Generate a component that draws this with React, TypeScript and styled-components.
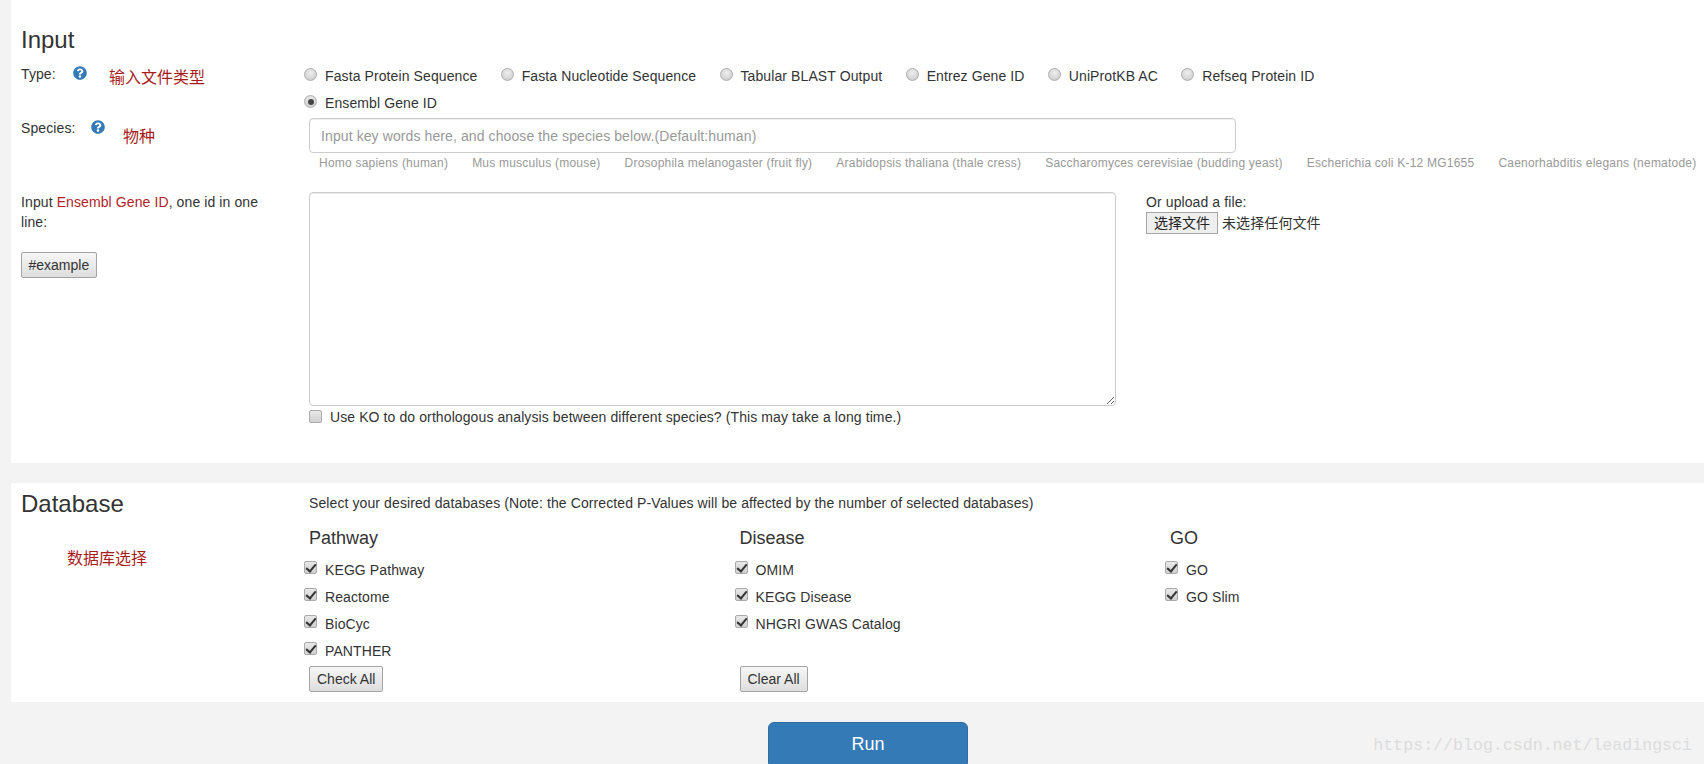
import React from 'react';
import styled, { createGlobalStyle } from 'styled-components';
import { FaQuestionCircle } from 'react-icons/fa';

const GlobalStyle = createGlobalStyle`
  html, body {
    margin: 0;
    height: 764px;
    overflow: hidden;
    background: #f3f3f3;
  }
  body {
    font-family: 'Liberation Sans', 'Noto Sans CJK SC', sans-serif;
    font-size: 14px;
    line-height: 20px;
    letter-spacing: 0.1px;
    color: #333;
  }
  * {
    box-sizing: border-box;
  }
`;

const Page = styled.div`
  position: relative;
  height: 764px;
  overflow: hidden;
  padding-left: 11px;
`;

const Panel = styled.section<{ $height: number }>`
  background: #fff;
  height: ${(p) => p.$height}px;
  padding-left: 10px;
  margin-bottom: 20px;
`;

const Title = styled.h3`
  font-size: 24px;
  font-weight: 400;
  line-height: 26px;
  letter-spacing: 0;
  margin: 0;
  color: #333;
`;

const InputTitle = styled(Title)`
  padding-top: 27px;
  margin-bottom: 8px;
`;

const Row = styled.div<{ $height: number }>`
  display: grid;
  grid-template-columns: 283px 1fr;
  height: ${(p) => p.$height}px;
`;

const SideLabel = styled.div<{ $top?: number }>`
  display: flex;
  align-items: flex-start;
  padding-top: ${(p) => p.$top ?? 0}px;
`;

const SideText = styled.span<{ $width: number }>`
  width: ${(p) => p.$width}px;
`;

const Help = styled(FaQuestionCircle)`
  color: #337ab7;
  font-size: 14px;
  margin-top: 2px;
`;

const Note = styled.span<{ $left: number; $top: number }>`
  font-family: 'Liberation Serif', 'Noto Sans CJK SC', serif;
  font-size: 16px;
  letter-spacing: 0;
  color: #a81c1c;
  margin-left: ${(p) => p.$left}px;
  margin-top: ${(p) => p.$top}px;
`;

const RadioGroup = styled.div`
  display: flex;
  flex-wrap: wrap;
  align-content: flex-start;
  width: 1060px;
  row-gap: 7px;
  column-gap: 23.3px;
  padding-top: 5px;
`;

const Option = styled.label`
  display: inline-flex;
  align-items: flex-start;
  height: 20px;
  color: #333;
`;

const Radio = styled.input.attrs({ type: 'radio' })`
  appearance: none;
  position: relative;
  width: 13px;
  height: 13px;
  margin: 2px 8px 0 0;
  border: 1px solid #adadad;
  border-radius: 50%;
  background: radial-gradient(circle at 50% 35%, #eeeeee 0%, #c8c8c8 100%);
  flex: none;

  &:checked::after {
    content: '';
    position: absolute;
    left: 2.5px;
    top: 2.5px;
    width: 6px;
    height: 6px;
    border-radius: 50%;
    background: #444;
  }
`;

const Checkbox = styled.input.attrs({ type: 'checkbox' })`
  appearance: none;
  position: relative;
  width: 13px;
  height: 13px;
  margin: 1px 8px 0 0;
  border: 1px solid #aaa;
  border-radius: 2px;
  background: linear-gradient(#e8e8e8, #d0d0d0);
  flex: none;

  &:checked::after {
    content: '';
    position: absolute;
    left: 3px;
    top: 0;
    width: 4px;
    height: 8px;
    border: solid #333;
    border-width: 0 2px 2px 0;
    transform: rotate(40deg);
  }
`;

const FieldColumn = styled.div`
  padding-left: 5px;
`;

const SpeciesInput = styled.input`
  display: block;
  width: 927px;
  height: 35px;
  padding: 0 11px;
  border: 1px solid #ccc;
  border-radius: 4px;
  font: inherit;
  letter-spacing: 0.1px;
  box-shadow: inset 0 1px 1px rgba(0, 0, 0, 0.075);

  &::placeholder {
    color: #999;
  }
`;

const SpeciesList = styled.div`
  display: flex;
  gap: 24px;
  padding-left: 10px;
  margin-top: 1px;
  font-size: 12px;
  line-height: 18px;
  letter-spacing: 0.22px;
  height: 18px;
  color: #999;
  white-space: nowrap;
`;

const Inline = styled.div`
  display: flex;
  align-items: flex-start;
  gap: 30px;
`;

const Sequence = styled.textarea`
  display: block;
  width: 807px;
  height: 214px;
  border: 1px solid #ccc;
  border-radius: 4px;
  box-shadow: inset 0 1px 1px rgba(0, 0, 0, 0.075);
`;

const Upload = styled.div`
  line-height: 20px;
`;

const FileRow = styled.div`
  display: flex;
  align-items: center;
  gap: 4px;
`;

const FileButton = styled.button`
  height: 22px;
  width: 72px;
  padding: 0;
  background: #efefef;
  border: 1px solid #a6a6a6;
  font: inherit;
  color: #222;
`;

const KoOption = styled(Option)`
  margin-top: 1px;
  width: max-content;

  input {
    margin: 3px 8px 0 0;
  }
`;

const Highlight = styled.span`
  color: #b21e2a;
`;

const Button = styled.button`
  display: block;
  height: 26px;
  padding: 0 6.5px;
  background: linear-gradient(#f6f6f6, #dedede);
  border: 1px solid #a4a4a4;
  border-radius: 2px;
  font: inherit;
  color: #333;
`;

const ExampleButton = styled(Button)`
  margin-top: 20px;
`;

const DatabaseTop = styled.div`
  padding-top: 10px;
  padding-left: 5px;
`;

const Columns = styled.div`
  display: grid;
  grid-template-columns: repeat(3, 430.5px);
  margin-top: 15px;
`;

const GroupTitle = styled.h4`
  font-size: 18px;
  font-weight: 400;
  line-height: 20px;
  letter-spacing: 0;
  margin: 0 0 12px 5px;
  color: #333;
`;

const CheckList = styled.div`
  display: flex;
  flex-direction: column;
  gap: 7px;
  height: 101px;
`;

const ActionButton = styled(Button)`
  margin: 5px 0 0 5px;
  padding: 0 7px;
`;

const DatabaseLabel = styled.div`
  display: flex;
  flex-direction: column;
`;

const DatabaseTitle = styled(Title)`
  padding-top: 8px;
`;

const RunBar = styled.div`
  display: flex;
  justify-content: center;
  margin-left: -11px;
  margin-top: 2px;
`;

const RunButton = styled.button`
  width: 200px;
  height: 46px;
  padding: 0 0 2px;
  background: #337ab7;
  border: 1px solid #2e6da4;
  border-radius: 6px;
  font: inherit;
  font-size: 18px;
  color: #fff;
  margin-left: 32px;
`;

const Watermark = styled.span`
  position: absolute;
  right: 12px;
  top: 736px;
  font-family: 'Liberation Mono', monospace;
  font-size: 16.6px;
  line-height: 20px;
  letter-spacing: 0;
  color: #dcdcdc;
`;

const fileTypes = [
  'Fasta Protein Sequence',
  'Fasta Nucleotide Sequence',
  'Tabular BLAST Output',
  'Entrez Gene ID',
  'UniProtKB AC',
  'Refseq Protein ID',
  'Ensembl Gene ID',
];

const species = [
  'Homo sapiens (human)',
  'Mus musculus (mouse)',
  'Drosophila melanogaster (fruit fly)',
  'Arabidopsis thaliana (thale cress)',
  'Saccharomyces cerevisiae (budding yeast)',
  'Escherichia coli K-12 MG1655',
  'Caenorhabditis elegans (nematode)',
];

const databases = [
  { name: 'Pathway', items: ['KEGG Pathway', 'Reactome', 'BioCyc', 'PANTHER'], action: 'Check All' },
  { name: 'Disease', items: ['OMIM', 'KEGG Disease', 'NHGRI GWAS Catalog'], action: 'Clear All' },
  { name: 'GO', items: ['GO', 'GO Slim'] },
];

function App() {
  return (
    <Page>
      <GlobalStyle />
      <Panel $height={463}>
        <InputTitle>Input</InputTitle>
        <Row $height={57}>
          <SideLabel $top={3}>
            <SideText $width={52}>Type:</SideText>
            <Help />
            <Note $left={22} $top={4}>输入文件类型</Note>
          </SideLabel>
          <RadioGroup>
            {fileTypes.map((type) => (
              <Option key={type}>
                <Radio name="type" defaultChecked={type === 'Ensembl Gene ID'} />
                {type}
              </Option>
            ))}
          </RadioGroup>
        </Row>
        <Row $height={74}>
          <SideLabel>
            <SideText $width={70}>Species:</SideText>
            <Help />
            <Note $left={18} $top={9}>物种</Note>
          </SideLabel>
          <FieldColumn>
            <SpeciesInput placeholder="Input key words here, and choose the species below.(Default:human)" />
            <SpeciesList>
              {species.map((name) => (
                <span key={name}>{name}</span>
              ))}
            </SpeciesList>
          </FieldColumn>
        </Row>
        <Row $height={240}>
          <div>
            <SideText as="div" $width={250}>
              Input <Highlight>Ensembl Gene ID</Highlight>, one id in one line:
            </SideText>
            <ExampleButton>#example</ExampleButton>
          </div>
          <FieldColumn>
            <Inline>
              <Sequence />
              <Upload>
                <div>Or upload a file:</div>
                <FileRow>
                  <FileButton>选择文件</FileButton>
                  未选择任何文件
                </FileRow>
              </Upload>
            </Inline>
            <KoOption>
              <Checkbox />
              Use KO to do orthologous analysis between different species? (This may take a long time.)
            </KoOption>
          </FieldColumn>
        </Row>
      </Panel>
      <Panel $height={219}>
        <Row $height={219}>
          <DatabaseLabel>
            <DatabaseTitle>Database</DatabaseTitle>
            <Note $left={46} $top={32}>数据库选择</Note>
          </DatabaseLabel>
          <div>
            <DatabaseTop>
              Select your desired databases (Note: the Corrected P-Values will be affected by the number of selected databases)
            </DatabaseTop>
            <Columns>
              {databases.map((db) => (
                <div key={db.name}>
                  <GroupTitle>{db.name}</GroupTitle>
                  <CheckList>
                    {db.items.map((item) => (
                      <Option key={item}>
                        <Checkbox defaultChecked />
                        {item}
                      </Option>
                    ))}
                  </CheckList>
                  {db.action && <ActionButton>{db.action}</ActionButton>}
                </div>
              ))}
            </Columns>
          </div>
        </Row>
      </Panel>
      <RunBar>
        <RunButton>Run</RunButton>
      </RunBar>
      <Watermark>https://blog.csdn.net/leadingsci</Watermark>
    </Page>
  );
}

export default App;
